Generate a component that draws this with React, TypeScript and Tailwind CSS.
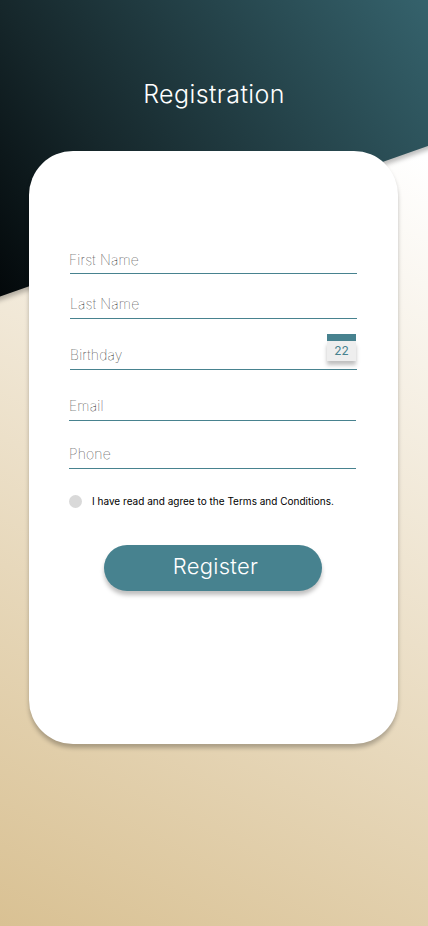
const fields = [
  { label: 'First Name', box: 'mt-[97px] ml-[41px]', text: '-ml-px', gap: 'pb-[1px]' },
  { label: 'Last Name', box: 'mt-[18px] ml-[41px]', text: '', gap: 'pb-[2px]' },
  { label: 'Birthday', box: 'mt-[24px] ml-[41px]', text: '', gap: 'pb-[2px]', calendar: true },
  { label: 'Email', box: 'mt-[24px] ml-10', text: '', gap: 'pb-[2px]' },
  { label: 'Phone', box: 'mt-[21px] ml-10', text: '', gap: 'pb-[2px]' },
];

function Calendar() {
  return (
    <div className="absolute right-0 bottom-[7px] flex h-[28px] w-[30px] flex-col">
      <div className="relative z-10 mr-px h-[7px] shrink-0 bg-[#47828f]" />
      <div className="mr-px flex h-[20px] items-center justify-center bg-[#eeeeee] text-[12px] leading-5 text-[#47828f] shadow-[0_4px_4px_rgba(0,0,0,0.25)]">
        22
      </div>
    </div>
  );
}

export default function App() {
  return (
    <main className="relative h-[926px] w-[428px] overflow-hidden bg-[linear-gradient(206.6deg,#ffffff_14%,#d9c193_100%)] font-['Inter',sans-serif]">
      <svg className="absolute top-0 left-0 h-[310px] w-[428px] overflow-visible drop-shadow-[0_4px_2px_rgba(0,0,0,0.25)]" viewBox="0 0 428 310">
        <defs>
          <linearGradient id="header" gradientUnits="userSpaceOnUse" x1="0" y1="296" x2="428" y2="0">
            <stop offset="0" stopColor="#03080a" />
            <stop offset="0.32" stopColor="#16272b" />
            <stop offset="1" stopColor="#35626c" />
          </linearGradient>
        </defs>
        <path d="M-10-10H438V142.5L-10 300Z" fill="url(#header)" />
      </svg>

      <div className="relative flex flex-col">
        <h1 className="mt-[78px] h-[32px] text-center text-[25px] leading-8 font-[350] tracking-[0.4px] text-white">
          Registration
        </h1>
        <form className="mt-[41px] ml-[29px] flex h-[593px] w-[369px] flex-col rounded-[44px] bg-white shadow-[0_4px_4px_rgba(0,0,0,0.25)]">
          {fields.map((f) => (
            <div key={f.label} className={`relative w-[287px] border-b border-[#47828f] ${f.box} ${f.gap}`}>
              <div className={`h-[24px] text-[14px] leading-6 font-thin tracking-[0.18px] text-black ${f.text}`}>
                {f.label}
              </div>
              {f.calendar && <Calendar />}
            </div>
          ))}
          <label className="mt-[26px] ml-10 flex h-[13px] items-center">
            <span className="size-[13px] rounded-full bg-[#d9d9d9]" />
            <span className="ml-[10px] pb-px text-[10px] leading-3 tracking-[0.01px] whitespace-nowrap text-black">
              I have read and agree to the Terms and Conditions.
            </span>
          </label>
          <button
            type="button"
            className="mt-[37px] ml-[75px] flex h-[46px] w-[218px] items-center justify-center rounded-full bg-[#47828f] pb-[3px] pl-[5px] text-[22px] font-[350] tracking-[0.3px] text-white shadow-[0_4px_4px_rgba(0,0,0,0.25)]"
          >
            Register
          </button>
        </form>
      </div>
    </main>
  );
}
